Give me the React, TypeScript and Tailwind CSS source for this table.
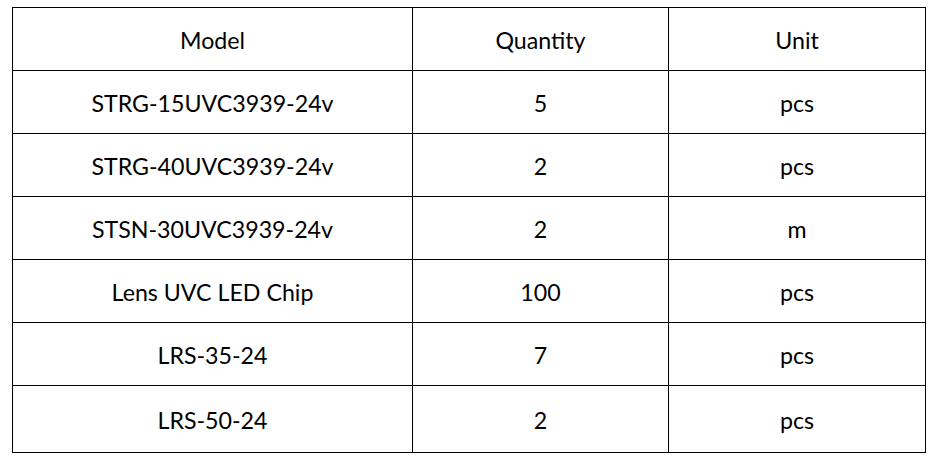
const rows: [string, string, string][] = [
  ["STRG-15UVC3939-24v", "5", "pcs"],
  ["STRG-40UVC3939-24v", "2", "pcs"],
  ["STSN-30UVC3939-24v", "2", "m"],
  ["Lens UVC LED Chip", "100", "pcs"],
  ["LRS-35-24", "7", "pcs"],
  ["LRS-50-24", "2", "pcs"],
];

export default function App() {
  return (
    <div className="min-h-[460px] bg-white pl-[12px] pt-[7px] font-['Lato',sans-serif] text-[23.2px] text-black">
      <table className="table-fixed border-collapse">
        <colgroup>
          <col className="w-[400px]" />
          <col className="w-[256px]" />
          <col className="w-[257px]" />
        </colgroup>
        <thead>
          <tr className="h-[63px]">
            <th className="border border-black pt-[2px] text-center font-normal">Model</th>
            <th className="border border-black pt-[2px] text-center font-normal">Quantity</th>
            <th className="border border-black pt-[2px] text-center font-normal">Unit</th>
          </tr>
        </thead>
        <tbody>
          {rows.map((r, i) => (
            <tr key={r[0]} className={i === rows.length - 1 ? "h-[67px]" : "h-[63px]"}>
              <td className="border border-black pt-[2px] text-center">{r[0]}</td>
              <td className="border border-black pt-[2px] text-center">{r[1]}</td>
              <td className="border border-black pt-[2px] text-center">{r[2]}</td>
            </tr>
          ))}
        </tbody>
      </table>
    </div>
  );
}
